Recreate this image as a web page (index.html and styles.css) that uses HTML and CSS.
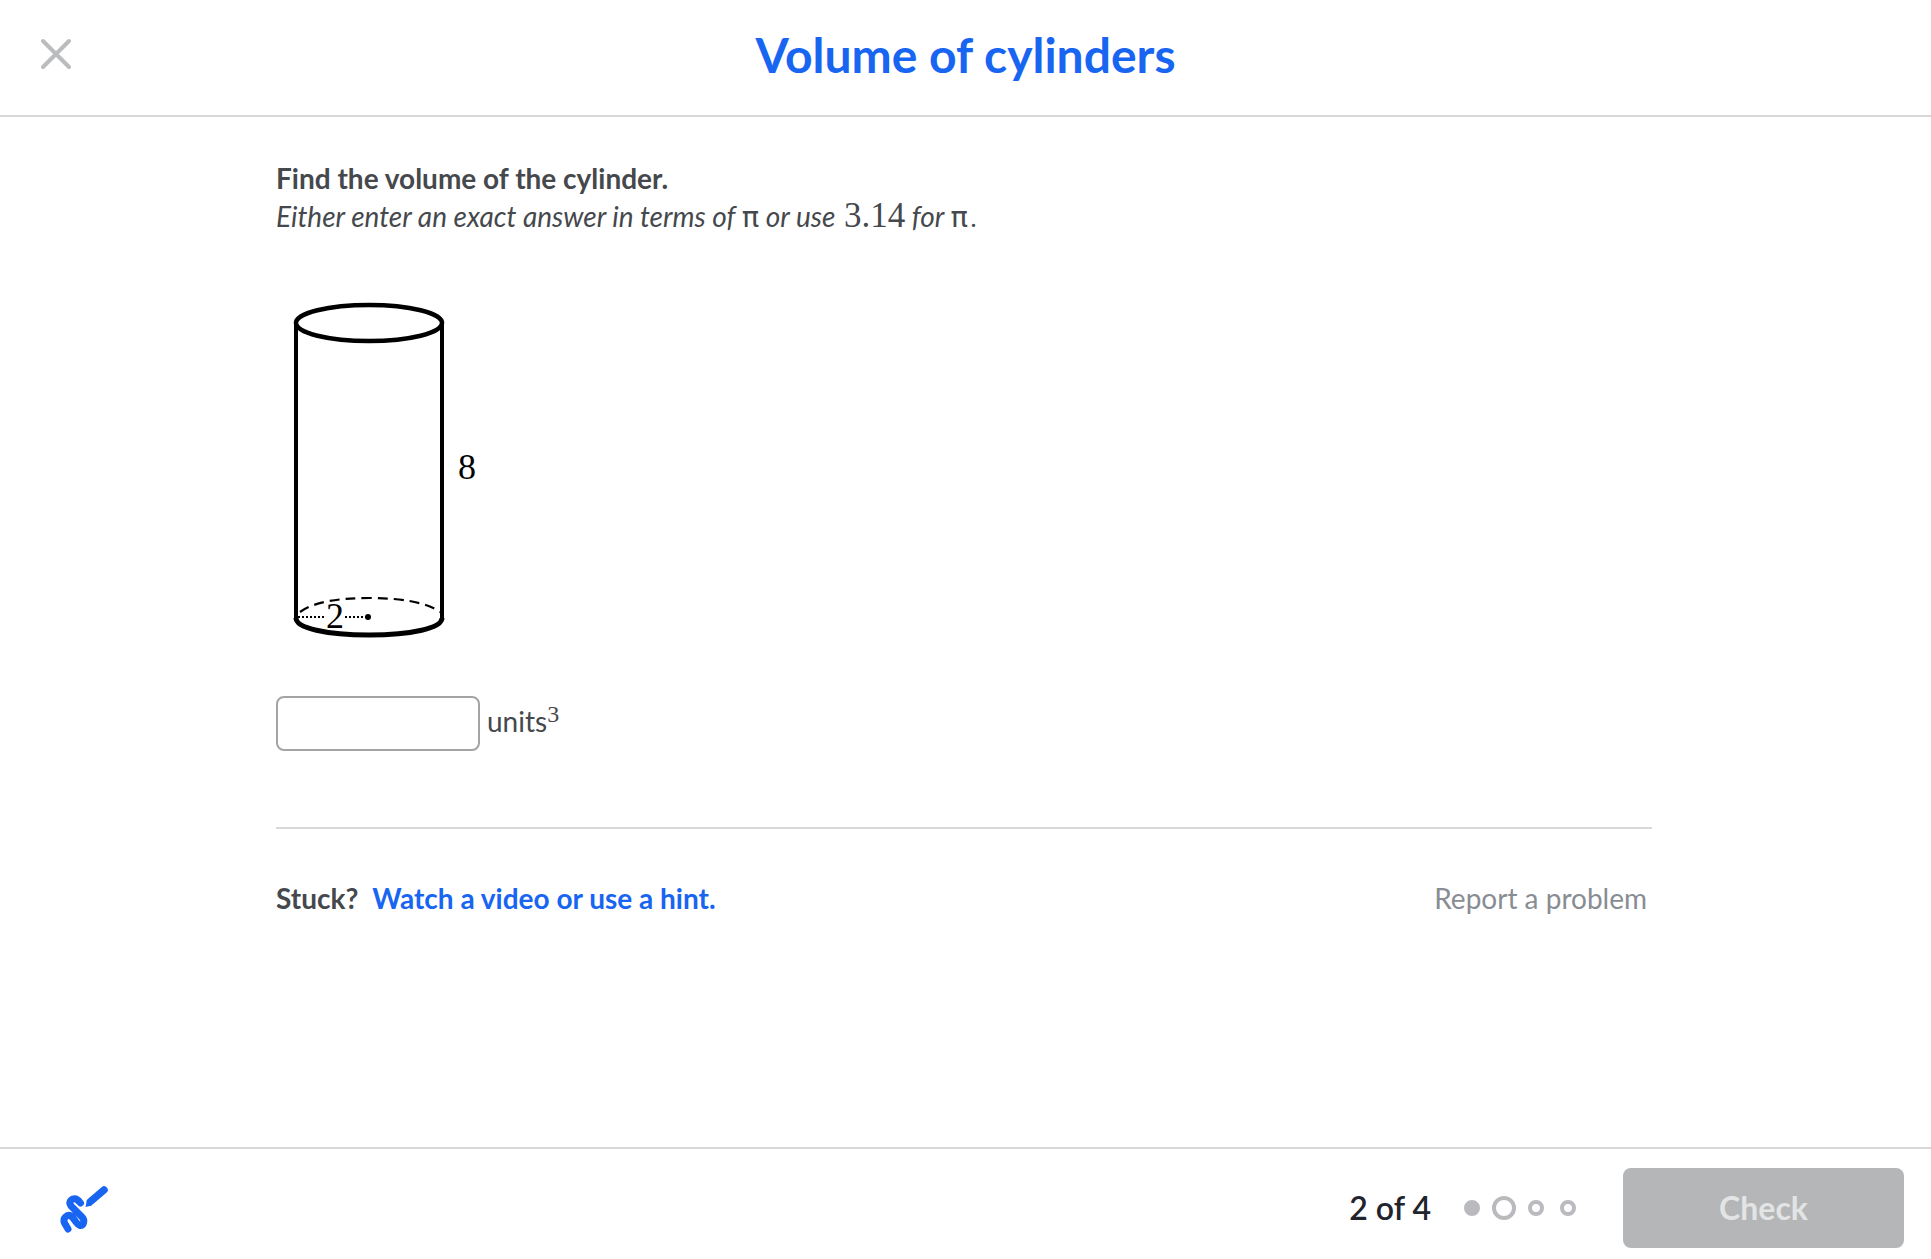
FILE: index.html
```html
<!DOCTYPE html>
<html lang="en">
<head>
    <meta charset="UTF-8">
    <meta name="viewport" content="width=device-width, initial-scale=1.0">
    <title>Volume of cylinders</title>
    <link rel="stylesheet" href="styles.css">
</head>
<body>
    <div class="page">
        <header class="top-bar">
            <button class="close-button" aria-label="Close">
                <svg width="32" height="32" viewBox="0 0 32 32">
                    <path d="M3 3 L29 29 M29 3 L3 29" fill="none" stroke="#bbbcbe" stroke-width="4" stroke-linecap="round"/>
                </svg>
            </button>
            <h1 class="title">Volume of cylinders</h1>
        </header>

        <main class="content">
            <p class="prompt"><strong>Find the volume of the cylinder.</strong></p>
            <p class="prompt"><em>Either enter an exact answer in terms of <span class="math pi">π</span> or use <span class="math number">3.14</span> for <span class="math pi">π</span><span class="math period">.</span></em></p>

            <svg class="diagram" width="220" height="344" viewBox="0 0 220 344">
                <g fill="none" stroke="#000">
                    <path d="M20 27 V322 M166 27 V322" stroke-width="4"/>
                    <ellipse cx="93" cy="27" rx="73" ry="18" stroke-width="4.5"/>
                    <path d="M20 322 C20 332 50 339 93 339 C136 339 166 332 166 322" stroke-width="5"/>
                    <path d="M24 316 C38 306 62 302 93 302 C124 302 150 306 164 316" stroke-width="2.2" stroke-dasharray="10 6"/>
                    <path d="M22 321 H49 M69 321 H90" stroke-width="2.2" stroke-dasharray="2 2"/>
                </g>
                <circle cx="92" cy="321" r="3" fill="#000"/>
                <text class="label" x="50" y="332">2</text>
                <text class="label" x="182" y="183">8</text>
            </svg>

            <div class="answer">
                <input class="answer-input" type="text" aria-label="Answer">
                <span class="units">units<sup class="math">3</sup></span>
            </div>

            <hr class="divider">

            <div class="help-row">
                <div class="help">
                    <span class="stuck">Stuck?</span>
                    <a class="hint-link" href="#">Watch a video or use a hint.</a>
                </div>
                <a class="report-link" href="#">Report a problem</a>
            </div>
        </main>

        <footer class="bottom-bar">
            <button class="scratchpad" aria-label="Scratchpad">
                <svg width="60" height="60" viewBox="0 0 60 60">
                    <path d="M16 51 L12.5 45 C10.5 40 15 36 19 38 C22 40 24 46 28 47.5 C32 48 33 42 30 39 L19 28 C16 23 20 20 24 21 C26 22 27 23 28.5 25" fill="none" stroke="#1865f2" stroke-width="7" stroke-linecap="round" stroke-linejoin="round"/>
                    <path d="M38.5 23.5 L52 12" fill="none" stroke="#1865f2" stroke-width="7.5" stroke-linecap="round"/>
                    <path d="M33.5 29 L35 22 L40 27.5 Z" fill="#1865f2"/>
                </svg>
            </button>
            <div class="progress">
                <span class="progress-text">2 of 4</span>
                <div class="dots">
                    <span class="dot done"></span>
                    <span class="dot current"></span>
                    <span class="dot"></span>
                    <span class="dot"></span>
                </div>
                <button class="check-button" disabled>Check</button>
            </div>
        </footer>
    </div>
</body>
</html>
```

FILE: styles.css
```css
* {
    box-sizing: border-box;
}
body {
    margin: 0;
    background-color: #fff;
    color: #45484c;
    font-family: 'Lato', sans-serif;
}
button {
    border: none;
    background: none;
    padding: 0;
    font-family: inherit;
}
.page {
    display: flex;
    flex-direction: column;
    height: 100vh;
}
.top-bar {
    display: grid;
    grid-template-columns: 112px 1fr 112px;
    align-items: center;
    flex: none;
    height: 117px;
    border-bottom: 2px solid #d8d9da;
}
.close-button {
    display: flex;
    margin-left: 40px;
    margin-top: -7px;
}
.title {
    margin: 0;
    margin-top: -7px;
    color: #1865f2;
    font-size: 48px;
    font-weight: 700;
    text-align: center;
}
.content {
    flex: 1;
    padding: 42px 279px 0 276px;
}
.prompt {
    margin: 0;
    font-size: 28px;
    line-height: 38px;
}
.math {
    font-family: 'Liberation Serif', serif;
    font-style: normal;
}
.pi {
    font-family: 'DejaVu Sans', sans-serif;
    font-size: 29px;
    line-height: 1;
}
.number {
    font-size: 35px;
    line-height: 1;
    margin-left: 2px;
}
.period {
    margin-left: 2px;
}
.diagram {
    display: block;
    margin-top: 59px;
}
.label {
    font-family: 'Liberation Serif', serif;
    font-size: 36px;
    fill: #000;
}
.answer {
    display: flex;
    align-items: flex-start;
    gap: 7px;
    margin-top: 56px;
}
.answer-input {
    width: 204px;
    height: 55px;
    border: 2px solid #a3a4a6;
    border-radius: 8px;
    background-color: #fff;
}
.units {
    font-size: 28px;
    line-height: 50px;
}
.units sup {
    font-size: 24px;
    line-height: 0;
}
.divider {
    height: 2px;
    margin: 76px 0 0;
    border: none;
    background-color: #d8d9da;
}
.help-row {
    display: flex;
    justify-content: space-between;
    align-items: center;
    margin-top: 50px;
    padding-right: 5px;
    font-size: 28px;
    line-height: 38px;
}
.help {
    display: flex;
    gap: 14px;
}
.stuck {
    font-weight: 700;
}
.hint-link {
    color: #1865f2;
    font-weight: 700;
    text-decoration: none;
}
.report-link {
    color: #888d93;
    text-decoration: none;
}
.bottom-bar {
    display: flex;
    justify-content: space-between;
    align-items: center;
    flex: none;
    height: 112px;
    padding: 7px 27px 0 52px;
    border-top: 2px solid #d8d9da;
}
.scratchpad {
    display: flex;
}
.progress {
    display: flex;
    align-items: center;
}
.progress-text {
    color: #21242c;
    font-size: 32px;
    font-weight: 600;
}
.dots {
    display: flex;
    align-items: center;
    gap: 16px;
    margin: 0 47px 0 33px;
}
.dot {
    width: 16px;
    height: 16px;
    border: 4px solid #b8babd;
    border-radius: 50%;
}
.dot.done {
    background-color: #b8babd;
}
.dot.current {
    width: 24px;
    height: 24px;
    margin: 0 -4px;
}
.check-button {
    width: 281px;
    height: 80px;
    border-radius: 8px;
    background-color: #b5b6b8;
    color: #e3e4e5;
    font-size: 32px;
    font-weight: 700;
}
```
